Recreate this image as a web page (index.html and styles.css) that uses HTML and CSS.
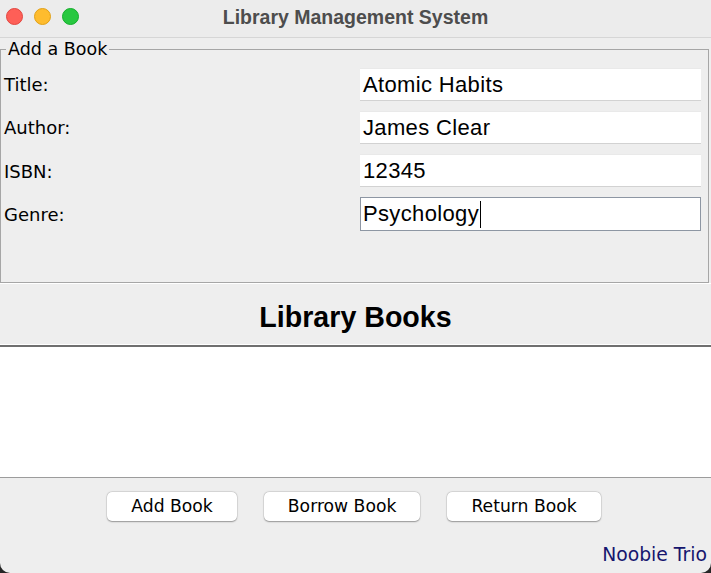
FILE: index.html
```html
<!DOCTYPE html>
<html>
<head>
<meta charset="utf-8">
<title>Library Management System</title>
<link rel="stylesheet" href="styles.css">
</head>
<body>
<div class="window">
  <div class="titlebar">
    <div class="lights">
      <span class="light red"></span>
      <span class="light yellow"></span>
      <span class="light green"></span>
    </div>
    <div class="title">Library Management System</div>
  </div>

  <fieldset class="addbook">
    <legend>Add a Book</legend>
    <div class="form">
      <label class="lbl">Title:</label>
      <div class="field">Atomic Habits</div>
      <label class="lbl">Author:</label>
      <div class="field">James Clear</div>
      <label class="lbl">ISBN:</label>
      <div class="field">12345</div>
      <label class="lbl">Genre:</label>
      <div class="field focused">Psychology<span class="caret"></span></div>
    </div>
  </fieldset>

  <div class="books-header">
    <h1>Library Books</h1>
  </div>

  <div class="table-pane"></div>

  <div class="bottom">
    <div class="actions">
      <button class="btn">Add Book</button>
      <button class="btn">Borrow Book</button>
      <button class="btn">Return Book</button>
    </div>
    <div class="credit">Noobie Trio</div>
  </div>
</div>
</body>
</html>
```

FILE: styles.css
```css
html, body {
  margin: 0;
  padding: 0;
  background: #262626;
}

.window {
  width: 711px;
  height: 573px;
  background: #eeeeee;
  border-radius: 0 0 10px 10px;
  overflow: hidden;
  display: flex;
  flex-direction: column;
  font-family: "DejaVu Sans", "Noto Sans", sans-serif;
  color: #000;
}

.titlebar {
  height: 37px;
  flex: none;
  background: #ececec;
  border-bottom: 1px solid #d6d6d6;
  position: relative;
  display: flex;
  align-items: center;
  justify-content: center;
}

.lights {
  position: absolute;
  left: 6px;
  top: 8px;
  display: flex;
  gap: 11px;
}

.light {
  width: 17px;
  height: 17px;
  border-radius: 50%;
  box-sizing: border-box;
}
.red { background: #fe5f57; border: 0.5px solid #e2463f; }
.yellow { background: #febc2e; border: 0.5px solid #e1a116; }
.green { background: #28c840; border: 0.5px solid #14ae2b; }

.title {
  font-family: "Liberation Sans", Arial, sans-serif;
  font-weight: bold;
  font-size: 19.5px;
  color: #4d4d4d;
  margin-bottom: 2px;
}

.addbook {
  flex: none;
  box-sizing: border-box;
  height: 245px;
  margin: 0 2px 0 0;
  padding: 0 7px 0 3px;
  border: 1px solid #a6a6a6;
  min-width: 0;
}

.addbook legend {
  font-size: 17.5px;
  line-height: 22px;
  padding: 0 2px;
  margin-left: 2px;
}

.form {
  margin-top: 2px;
  display: grid;
  grid-template-columns: 1fr 341px;
  grid-template-rows: repeat(4, 43.33px);
  align-items: center;
}

.lbl {
  font-size: 18px;
  line-height: 22px;
  padding-top: 3px;
}

.field {
  height: 32px;
  box-sizing: border-box;
  background: #fff;
  border-top: 1px solid #e9e9e9;
  box-shadow: 0 1px 0 #d2d2d2;
  padding-left: 3px;
  font-family: "Liberation Sans", Arial, sans-serif;
  font-size: 22px;
  letter-spacing: 0.35px;
  line-height: 31px;
  white-space: nowrap;
}

.field.focused {
  height: 34px;
  border: 1px solid #8d96a3;
  box-shadow: none;
  padding-left: 2px;
  line-height: 31px;
}

.caret {
  display: inline-block;
  width: 1px;
  height: 27px;
  background: #000;
  vertical-align: -7px;
  margin-left: 1px;
}

.books-header {
  flex: none;
  height: 62px;
  box-sizing: border-box;
  border-top: 1px solid #ffffff;
  border-bottom: 1px solid #ffffff;
  display: flex;
  align-items: center;
  justify-content: center;
}

.books-header h1 {
  margin: 6px 0 0 0;
  font-family: "Liberation Sans", Arial, sans-serif;
  font-weight: bold;
  font-size: 28.6px;
  line-height: 32px;
  color: #000;
}

.table-pane {
  flex: none;
  height: 133px;
  box-sizing: border-box;
  background: #ffffff;
  border-top: 2px solid #6f6f6f;
  border-bottom: 1px solid #9c9c9c;
}

.bottom {
  flex: 1;
  display: flex;
  flex-direction: column;
  padding-top: 14px;
}

.actions {
  display: flex;
  justify-content: center;
  gap: 27px;
  padding-right: 3px;
}

.btn {
  height: 29px;
  padding: 0 24px;
  border: none;
  border-radius: 5px;
  background: #ffffff;
  box-shadow: 0 0.5px 1.5px rgba(0, 0, 0, 0.35), 0 0 0 0.5px rgba(0, 0, 0, 0.08);
  font-family: "DejaVu Sans", "Noto Sans", sans-serif;
  font-size: 17.2px;
  line-height: 29px;
  color: #000;
}

.credit {
  margin-top: 23px;
  align-self: flex-end;
  padding-right: 4px;
  font-size: 18.8px;
  line-height: 21px;
  color: #16166e;
}
```
